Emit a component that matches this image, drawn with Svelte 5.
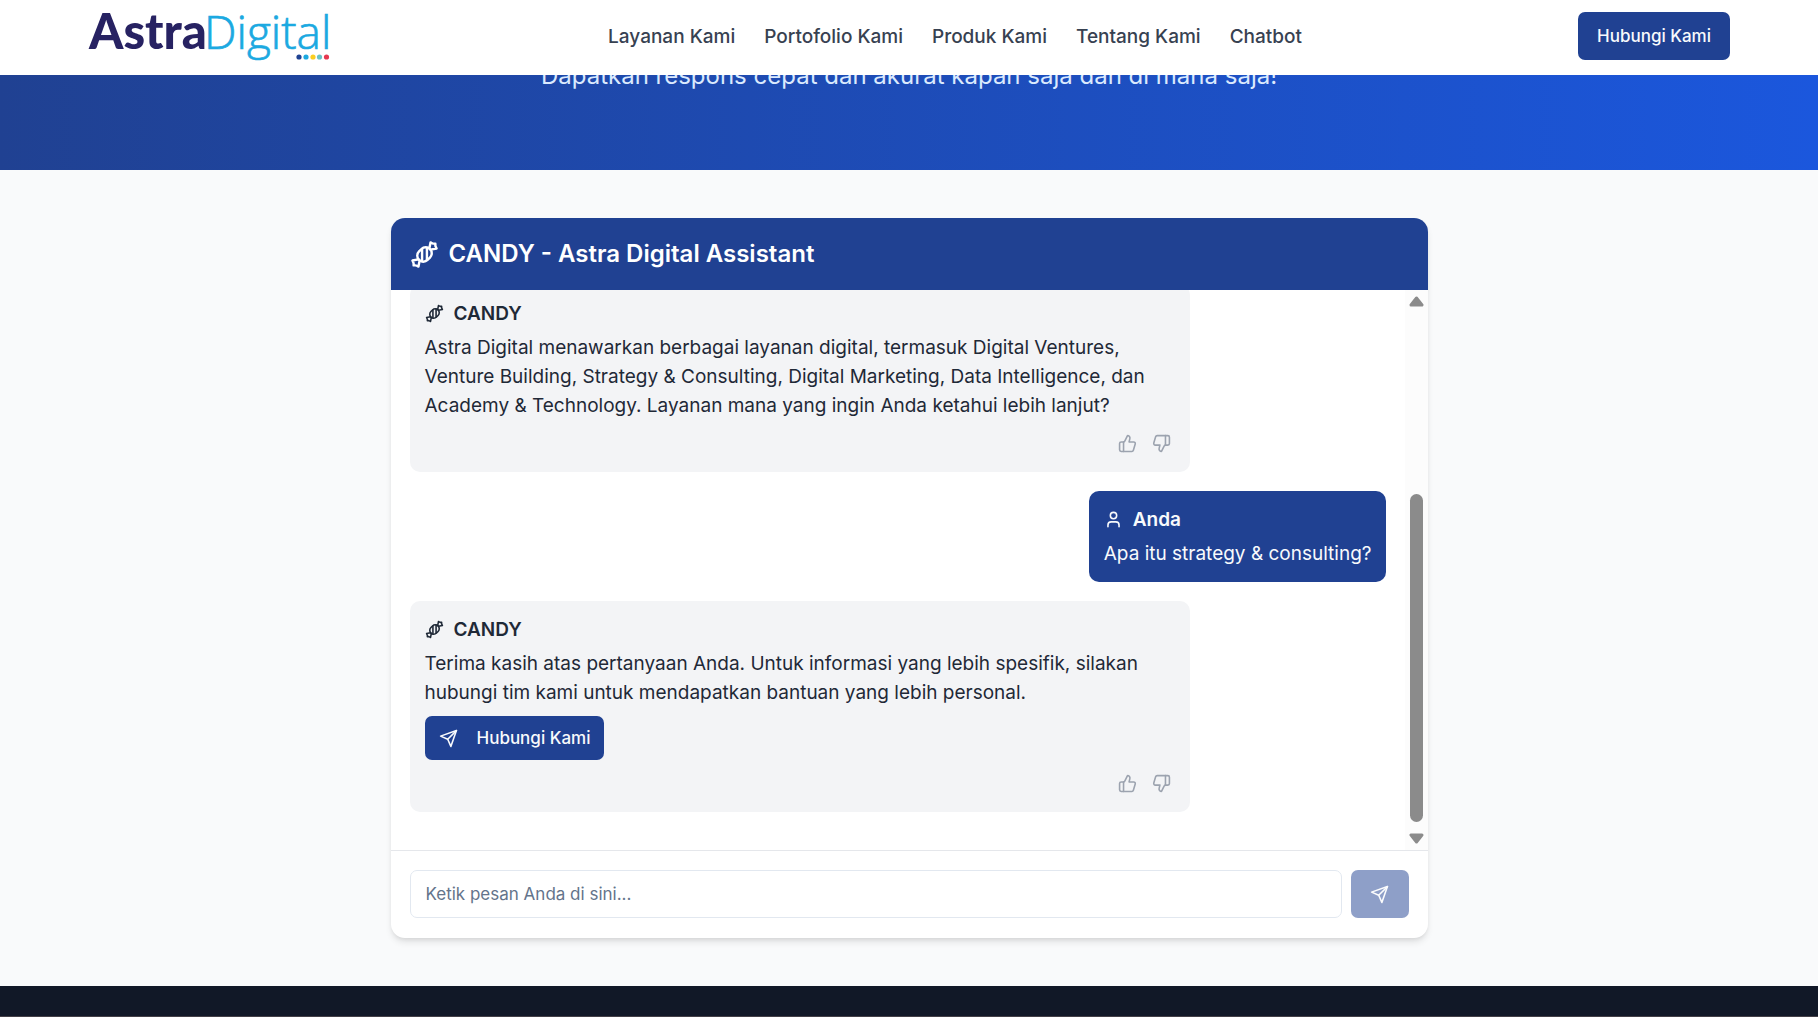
<script>
  const links = ['Layanan Kami', 'Portofolio Kami', 'Produk Kami', 'Tentang Kami', 'Chatbot'];
  const messages = [
    {
      from: 'bot',
      text: 'Astra Digital menawarkan berbagai layanan digital, termasuk Digital Ventures, Venture Building, Strategy & Consulting, Digital Marketing, Data Intelligence, dan Academy & Technology. Layanan mana yang ingin Anda ketahui lebih lanjut?'
    },
    { from: 'user', text: 'Apa itu strategy & consulting?' },
    {
      from: 'bot',
      text: 'Terima kasih atas pertanyaan Anda. Untuk informasi yang lebih spesifik, silakan hubungi tim kami untuk mendapatkan bantuan yang lebih personal.',
      contact: true
    }
  ];
  let draft = $state('');
</script>

{#snippet candy()}
  <svg class="icon" viewBox="0 0 24 24" aria-hidden="true">
    <path d="m9.5 7.5-2 2a4.95 4.95 0 1 0 7 7l2-2a4.95 4.95 0 1 0-7-7Z" />
    <path d="M14 6.5v10" />
    <path d="M10 7.5v10" />
    <path d="m16 7 1-5 1.37.68A3 3 0 0 0 19.7 3H21v1.3c0 .46.1.92.32 1.33L22 7l-5 1" />
    <path d="m8 17-1 5-1.37-.68A3 3 0 0 0 4.3 21H3v-1.3a3 3 0 0 0-.32-1.33L2 17l5-1" />
  </svg>
{/snippet}

{#snippet send()}
  <svg class="icon" viewBox="0 0 24 24" aria-hidden="true">
    <path d="M22 2 15 22 11 13 2 9Z" />
    <path d="M22 2 11 13" />
  </svg>
{/snippet}

<header class="topbar">
  <div class="topbar-inner">
    <a class="logo" href="#home" aria-label="Astra Digital">
      <svg viewBox="0 0 244 74" aria-hidden="true">
        <text class="logo-astra" x="1" y="50">Astra</text>
        <text class="logo-digital" x="116" y="50">Digital</text>
        <circle cx="211" cy="58" r="2.6" fill="#1f4292" />
        <circle cx="218" cy="58" r="2.6" fill="#1ba9e1" />
        <circle cx="225" cy="58" r="2.6" fill="#fbce20" />
        <circle cx="231.5" cy="58" r="2.6" fill="#69c3c5" />
        <circle cx="238.5" cy="58" r="2.6" fill="#e63950" />
      </svg>
    </a>
    <nav>
      {#each links as link}
        <a href="#nav">{link}</a>
      {/each}
    </nav>
    <button class="primary large" type="button">Hubungi Kami</button>
  </div>
</header>

<section class="hero">
  <p>Dapatkan respons cepat dan akurat kapan saja dan di mana saja!</p>
</section>

<main>
  <section class="card">
    <h1>{@render candy()} CANDY - Astra Digital Assistant</h1>
    <div class="chat">
      <div class="messages">
        {#each messages as message}
          <article class="bubble {message.from}">
            <h2>
              {#if message.from === 'bot'}
                {@render candy()} CANDY
              {:else}
                <svg class="icon" viewBox="0 0 24 24" aria-hidden="true">
                  <path d="M19 21v-2a4 4 0 0 0-4-4H9a4 4 0 0 0-4 4v2" />
                  <circle cx="12" cy="7" r="4" />
                </svg>
                Anda
              {/if}
            </h2>
            <p>{message.text}</p>
            {#if message.contact}
              <button class="primary contact" type="button">{@render send()} Hubungi Kami</button>
            {/if}
            {#if message.from === 'bot'}
              <div class="votes">
                <button type="button" aria-label="Suka">
                  <svg class="icon" viewBox="0 0 24 24" aria-hidden="true">
                    <path d="M7 10v12" />
                    <path d="M15 5.88 14 10h5.83a2 2 0 0 1 1.92 2.56l-2.33 8A2 2 0 0 1 17.5 22H4a2 2 0 0 1-2-2v-8a2 2 0 0 1 2-2h2.76a2 2 0 0 0 1.79-1.11L12 2a3.13 3.13 0 0 1 3 3.88Z" />
                  </svg>
                </button>
                <button type="button" aria-label="Tidak suka">
                  <svg class="icon" viewBox="0 0 24 24" aria-hidden="true">
                    <path d="M17 14V2" />
                    <path d="M9 18.12 10 14H4.17a2 2 0 0 1-1.92-2.56l2.33-8A2 2 0 0 1 6.5 2H20a2 2 0 0 1 2 2v8a2 2 0 0 1-2 2h-2.76a2 2 0 0 0-1.79 1.11L12 22a3.13 3.13 0 0 1-3-3.88Z" />
                  </svg>
                </button>
              </div>
            {/if}
          </article>
        {/each}
      </div>
      <div class="scrollbar" aria-hidden="true">
        <svg viewBox="0 0 15 11"><path d="M7.5 2 13 9H2Z" /></svg>
        <div class="track"><div class="thumb"></div></div>
        <svg viewBox="0 0 15 11"><path d="M7.5 9 2 2H13Z" /></svg>
      </div>
    </div>
    <form onsubmit={(event) => event.preventDefault()}>
      <input type="text" aria-label="Pesan" placeholder="Ketik pesan Anda di sini..." bind:value={draft} />
      <button class="primary submit" type="submit" aria-label="Kirim" disabled={!draft}>{@render send()}</button>
    </form>
  </section>
</main>

<footer></footer>

<style>
  :global(body) {
    background: #f9fafb;
    color: #1f2937;
    font-family: Inter, 'Liberation Sans', sans-serif;
    font-size: 19px;
    line-height: 29px;
  }
  :global(#app) {
    display: flex;
    flex-direction: column;
    height: 100vh;
    overflow: hidden;
  }
  * {
    box-sizing: border-box;
  }
  h1,
  h2,
  p {
    margin: 0;
  }
  button,
  input {
    font: inherit;
  }
  .icon {
    flex: none;
    width: 19px;
    height: 19px;
    fill: none;
    stroke: currentColor;
    stroke-width: 2;
    stroke-linecap: round;
    stroke-linejoin: round;
  }
  .primary {
    border: 0;
    border-radius: 7px;
    background: #204192;
    color: #f8fafc;
    font-size: 17px;
    font-weight: 500;
    line-height: 24px;
  }
  .topbar {
    position: relative;
    z-index: 1;
    flex: none;
    background: #fff;
  }
  .topbar-inner {
    display: flex;
    justify-content: space-between;
    align-items: center;
    max-width: 1642px;
    height: 75px;
    margin: 0 auto;
    padding-bottom: 3px;
  }
  .logo svg {
    display: block;
    width: 244px;
    height: 74px;
  }
  .logo-astra {
    fill: #272262;
    font: 900 49px Lato, sans-serif;
  }
  .logo-digital {
    fill: #1ba9e1;
    stroke: #1ba9e1;
    stroke-width: 0.7;
    font: 300 46px 'Open Sans', sans-serif;
  }
  nav {
    display: flex;
    gap: 29px;
  }
  nav a {
    color: #374151;
    font-weight: 500;
    text-decoration: none;
  }
  .large {
    padding: 12px 19px;
  }
  .hero {
    flex: none;
    display: flex;
    flex-direction: column;
    justify-content: flex-end;
    height: 112px;
    margin-top: -17px;
    padding-bottom: 77px;
    background: linear-gradient(to right, #204192, #1b57dd);
    color: #dbeafe;
    font-size: 24px;
    line-height: 34px;
    text-align: center;
  }
  main {
    flex: none;
    width: 100%;
    max-width: 1075px;
    margin: 0 auto;
    padding: 48px 19px;
  }
  .card {
    overflow: hidden;
    border-radius: 14px;
    background: #fff;
    box-shadow: 0 5px 7px -1px rgb(0 0 0 / 0.1), 0 2px 5px -2px rgb(0 0 0 / 0.1);
  }
  h1 {
    display: flex;
    align-items: center;
    gap: 10px;
    padding: 19px;
    background: #204192;
    color: #fff;
    font-size: 24px;
    font-weight: 600;
    line-height: 34px;
  }
  h1 .icon {
    width: 29px;
    height: 29px;
  }
  .chat {
    display: flex;
    height: 560px;
  }
  .messages {
    flex: 1;
    display: flex;
    flex-direction: column;
    justify-content: flex-end;
    gap: 19px;
    padding: 0 19px 38px;
    overflow: hidden;
  }
  .bubble {
    flex: none;
    align-self: flex-start;
    max-width: 80%;
    padding: 14px 14px 14px 15px;
    border-radius: 10px;
    background: #f3f4f6;
  }
  .user {
    align-self: flex-end;
    background: #204192;
    color: #f8fafc;
  }
  h2 {
    display: flex;
    align-items: center;
    gap: 10px;
    margin-bottom: 5px;
    font-size: 19px;
    font-weight: 600;
    line-height: 29px;
  }
  .contact {
    display: flex;
    align-items: center;
    gap: 19px;
    margin-top: 9px;
    padding: 10px 14px;
  }
  .votes {
    display: flex;
    justify-content: flex-end;
    gap: 5px;
    margin-top: 9px;
  }
  .votes button {
    display: flex;
    padding: 5px;
    border: 0;
    background: none;
    color: #9ca3af;
  }
  .scrollbar {
    display: flex;
    flex-direction: column;
    align-items: center;
    justify-content: space-between;
    width: 23px;
    padding: 6px 0;
    background: #fcfcfc;
  }
  .scrollbar svg {
    width: 15px;
    height: 11px;
    fill: #8b8b8b;
    stroke: #8b8b8b;
    stroke-width: 3;
    stroke-linejoin: round;
  }
  .track {
    flex: 1;
    display: flex;
    flex-direction: column;
    justify-content: flex-end;
    padding: 11px 0;
  }
  .thumb {
    width: 13px;
    height: 65%;
    border-radius: 7px;
    background: #8b8b8b;
  }
  form {
    display: flex;
    gap: 9px;
    padding: 19px 19px 20px;
    border-top: 1px solid #e5e7eb;
  }
  input {
    flex: 1;
    min-width: 0;
    height: 48px;
    padding: 0 15px;
    border: 1px solid #e2e8f0;
    border-radius: 7px;
    background: #fff;
    color: #1f2937;
    font-size: 17px;
  }
  input::placeholder {
    color: #64748b;
  }
  .submit {
    display: flex;
    align-items: center;
    justify-content: center;
    width: 58px;
  }
  .submit:disabled {
    opacity: 0.5;
  }
  footer {
    flex: 1;
    border-bottom: 1px solid #444047;
    background: #111827;
  }
</style>
